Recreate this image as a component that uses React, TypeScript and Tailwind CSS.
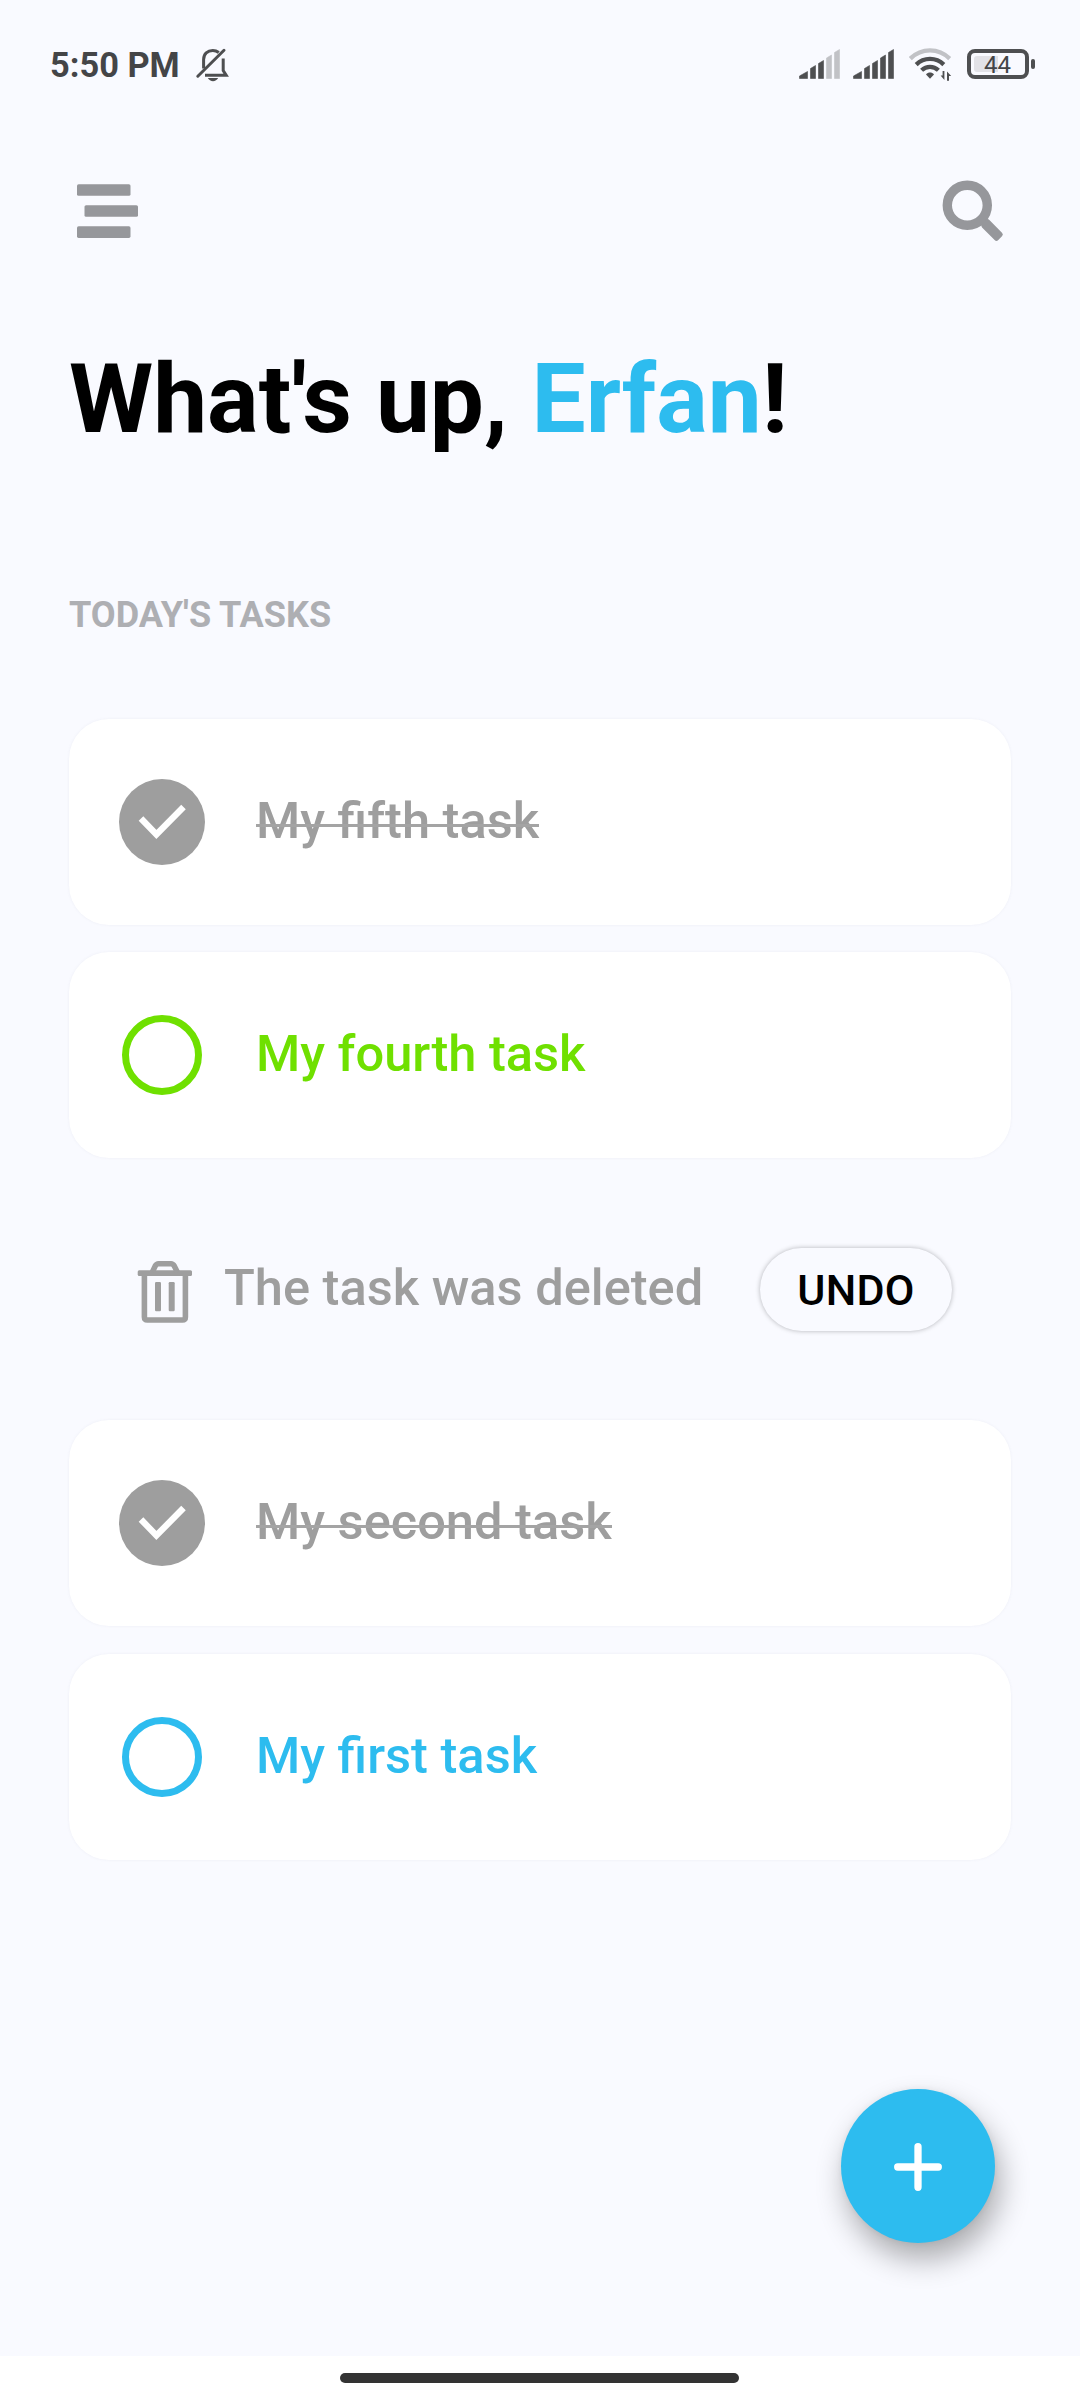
import React from "react";

function BellOff() {
  return (
    <svg width="34" height="34" viewBox="195 47 34 34" fill="none" stroke="#4e4f51" strokeWidth="3">
      <path d="M203.600 67.500V58.500C203.600 53 207.500 49.500 212.800 49.500C215 49.500 217 50.200 218.800 51.500" />
      <path d="M205 74.200H226.200L223.200 69.500V57.500" />
      <path d="M197.800 75.200L224 49.300" strokeLinecap="round" />
      <path d="M207.800 77H218.200C217.200 79 215 80.200 213 80.200S208.800 79 207.800 77Z" fill="#4e4f51" stroke="none" />
    </svg>
  );
}

function Signal({ level }: { level: number }) {
  const bars = [
    "M0 29V26.5L8 22V29Z",
    "M11 29V19L16 16V29Z",
    "M19 29V14L24 11V29Z",
    "M27 29V8.5L32 5.5V29Z",
    "M35 29V3L40 0V29Z",
  ];
  return (
    <svg width="41" height="30" viewBox="-.5 -.5 41 30">
      {bars.map((d, i) => (
        <path key={d} d={d} fill={i < level ? "#4e4f51" : "#c1c2c6"} stroke={i < level ? "#4e4f51" : "#c1c2c6"} strokeWidth=".6" strokeLinejoin="round" />
      ))}
    </svg>
  );
}

function Wifi() {
  return (
    <svg width="44" height="34" viewBox="909 48 44 34" fill="none" strokeWidth="4.300">
      <path d="M910.3 59.6C921.5 48.6 938.5 48.6 949.7 59.6" stroke="#c1c2c6" />
      <path d="M916.2 65.6C924 58 936 58 943.8 65.6" stroke="#4e4f51" />
      <path d="M921.6 71.3C926.5 66.6 933.5 66.6 938.4 71.3" stroke="#4e4f51" />
      <path d="M926 75.4C928.2 73 931.8 73 934 75.4L930 79.7Z" fill="#4e4f51" stroke="none" />
      <path d="M944.4 72V81L940.6 76.6H942.6V72ZM947 81.800V72.500L951.200 77H949V81.800Z" fill="#4e4f51" />
    </svg>
  );
}

function Battery() {
  return (
    <div className="flex items-center gap-[2px]">
      <div className="flex h-[30px] w-[62px] items-center rounded-[8px] border-4 border-[#4e4f51] p-[3px]">
        <div className="h-4 w-6 rounded-l-[3px] bg-[#e2e2e7]" />
        <span className="-ml-[14px] pt-[2px] text-[24px] leading-[22px] text-[#444547]">44</span>
      </div>
      <div className="h-[10px] w-1 rounded-[2px] bg-[#4e4f51]" />
    </div>
  );
}

function StatusBar() {
  return (
    <div className="flex h-[130px] items-start justify-between pl-[50px] pr-[45px]">
      <div className="flex h-[130px] items-center gap-[15px]">
        <span className="text-[34.4px] font-bold leading-[40px] text-[#444547]">5:50 PM</span>
        <BellOff />
      </div>
      <div className="flex h-[128px] items-center">
        <Signal level={3} />
        <span className="w-[13px]" />
        <Signal level={5} />
        <span className="w-[15px]" />
        <Wifi />
        <span className="w-[14px]" />
        <Battery />
      </div>
    </div>
  );
}

function MenuIcon() {
  return (
    <svg width="62" height="56" viewBox="77 183 62 56" fill="#96979b">
      <rect x="77" y="184.200" width="53.500" height="11.600" rx="1.600" />
      <rect x="84.500" y="205.200" width="53.500" height="11.600" rx="1.600" />
      <rect x="77" y="226.300" width="53.500" height="11.600" rx="1.600" />
    </svg>
  );
}

function SearchIcon() {
  return (
    <svg width="64" height="64" viewBox="941 179 64 64" fill="#96979b">
      <circle cx="967.300" cy="205.200" r="20" fill="none" stroke="#96979b" strokeWidth="9.400" />
      <rect x="-3" y="-5.200" width="23" height="10.400" rx="2.600" transform="translate(986 224) rotate(45)" />
    </svg>
  );
}

function TrashIcon() {
  return (
    <svg width="56" height="64" viewBox="137 1260 56 64" fill="none" stroke="#9e9e9e" className="mt-[6px]">
      <rect x="137.700" y="1270.200" width="54.300" height="5.800" rx="1.500" fill="#9e9e9e" stroke="none" />
      <path d="M152.400 1272L155.200 1266Q156.500 1263.800 158.500 1263.800H171Q173 1263.800 174.300 1266L177.300 1272" strokeWidth="5.500" />
      <path d="M144.400 1275V1317Q144.400 1320 147.400 1320H182.400Q185.400 1320 185.400 1317V1275" strokeWidth="5.600" />
      <rect x="155" y="1282" width="6" height="29.300" rx="1.200" fill="#9e9e9e" stroke="none" />
      <rect x="168.700" y="1282" width="6" height="29.300" rx="1.200" fill="#9e9e9e" stroke="none" />
    </svg>
  );
}

function DoneIcon() {
  return (
    <div className="flex size-[86px] items-center justify-center rounded-full bg-[#9e9e9e]">
      <svg width="86" height="86" viewBox="119 778.500 86 86" fill="none" stroke="#fff" strokeWidth="6.400">
        <path d="M141 818L156.400 834L183.500 806.500" />
      </svg>
    </div>
  );
}

interface Task {
  title: string;
  tone: "done" | "green" | "blue";
}

function TaskCard({ title, tone }: Task) {
  const ring = tone === "green" ? "border-[#6fe000]" : "border-[#2dbcef]";
  const text = tone === "done" ? "text-[#9e9e9e]" : tone === "green" ? "text-[#6fe000]" : "text-[#2dbcef]";
  return (
    <div className="flex h-[206px] items-center rounded-[40px] bg-white pl-[50px] shadow-[0_0_3px_rgba(120,120,150,0.09)]">
      <div className="flex w-[86px] justify-center">
        {tone === "done" ? <DoneIcon /> : <div className={`size-[80px] rounded-full border-[7px] ${ring}`} />}
      </div>
      <span className={`relative ml-[51px] pb-[2px] text-[50.6px] font-medium leading-[60px] ${text}`}>
        {title}
        {tone === "done" && <span className="absolute inset-x-0 top-[33px] h-[3px] bg-[#a4a4a4]" />}
      </span>
    </div>
  );
}

function DeletedRow() {
  return (
    <div className="flex h-[206px] items-center pl-[68px] pr-[59px]">
      <TrashIcon />
      <span className="ml-[31px] pb-[2px] text-[50.6px] font-medium leading-[60px] text-[#9e9e9e]">The task was deleted</span>
      <button className="ml-auto flex h-[83px] w-[192px] items-center justify-center rounded-full bg-[#f9faff] pt-[3px] text-[43px] font-medium tracking-[0.3px] text-black shadow-[0_0_5px_rgba(0,0,0,0.28)]">
        UNDO
      </button>
    </div>
  );
}

export default function App() {
  return (
    <div className="flex h-[2400px] w-[1080px] flex-col overflow-hidden bg-[#f9faff] font-[Roboto,sans-serif]">
      <StatusBar />
      <header className="flex h-[162px] items-center justify-between pl-[77px] pr-[75px]">
        <MenuIcon />
        <SearchIcon />
      </header>
      <h1 className="mt-[47px] pl-[69px] text-[96.25px] font-bold leading-[120px] text-black">
        What&apos;s up, <span className="text-[#2dbcef]">Erfan</span>!
      </h1>
      <h2 className="mt-[134px] pl-[69px] text-[36.1px] font-bold leading-[44px] text-[#aeafb3]">TODAY&apos;S TASKS</h2>
      <main className="mt-[81.5px] flex flex-col gap-[27.75px] px-[69px]">
        <TaskCard title="My fifth task" tone="done" />
        <TaskCard title="My fourth task" tone="green" />
        <DeletedRow />
        <TaskCard title="My second task" tone="done" />
        <TaskCard title="My first task" tone="blue" />
      </main>
      <button className="mr-[85px] mt-auto mb-[113px] flex size-[154px] shrink-0 items-center justify-center self-end rounded-full bg-[#2dbcef] pt-px shadow-[5px_16px_30px_rgba(0,0,0,0.32),0_0_6px_rgba(0,0,0,0.06)]">
        <svg width="50" height="50" viewBox="0 0 50 50" stroke="#fff" strokeWidth="7.300" strokeLinecap="round">
          <path d="M25 4.700V45.300M4.700 25H45.300" />
        </svg>
      </button>
      <footer className="flex h-[44px] shrink-0 justify-center bg-white pr-px pt-[17px]">
        <div className="h-[10px] w-[399px] rounded-full bg-[#333]" />
      </footer>
    </div>
  );
}
